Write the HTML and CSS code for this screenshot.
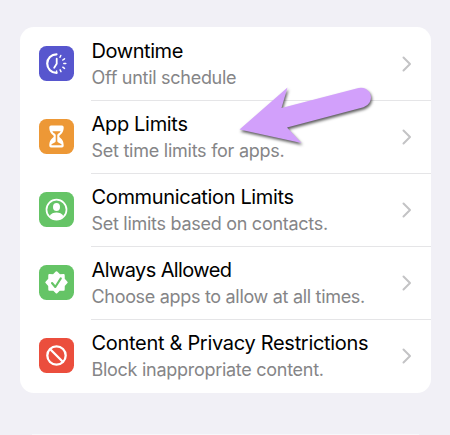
FILE: index.html
```html
<!DOCTYPE html>
<html lang="en">
<head>
<meta charset="utf-8">
<title>Screen Time</title>
<link rel="stylesheet" href="styles.css">
</head>
<body>
<main class="card">
  <section class="row">
    <svg class="icon indigo" viewBox="0 0 35 35">
      <g fill="none" stroke="#fff" stroke-linecap="round">
        <path d="M17.500 8.300a9.300 9.300 0 0 0 0 18.600" stroke-width="2.200"/>
        <path d="M17.700 12.700v5l-2.500 4.100" stroke-width="1.800"/>
        <path d="M21 11.200l.8-1.700M23.800 14l1.700-1.200M24.800 17.600h2M23.800 21.200l1.700 1.200M21.100 23.800l.9 1.800M17.600 25v2" stroke-width="1.500"/>
      </g>
    </svg>
    <div class="body">
      <div class="text"><h2 class="t1">Downtime</h2><p class="s1">Off until schedule</p></div>
      <svg class="chevron" viewBox="0 0 10 16"><path d="M1.500 1.500L8 8l-6.500 6.500"/></svg>
    </div>
  </section>
  <section class="row">
    <svg class="icon orange" viewBox="0 0 35 35">
      <path fill="#fff" d="M12 6.500h11q1.700 0 1.700 1.800c0 4.300-1.700 6.300-4.100 8.200q-.8.800 0 1.800c2.400 1.900 4.100 4 4.100 8.500q0 1.700-1.700 1.700H12q-1.700 0-1.700-1.700c0-4.500 1.700-6.600 4.100-8.500q.8-1 0-1.800c-2.400-1.900-4.100-3.900-4.100-8.200q0-1.800 1.700-1.800z"/>
      <path fill="#ed9836" d="M13.300 12.200h8.400q-.8 1.600-2.600 2.500-.8.500-.8 1.500v5.900q0 1 1 1.500l3.200 1.600v1H12.500v-1l3.200-1.600q1-.5 1-1.500v-5.900q0-1-.8-1.500-1.800-.9-2.600-2.500z"/>
    </svg>
    <div class="body">
      <div class="text"><h2 class="t2">App Limits</h2><p class="s2">Set time limits for apps.</p></div>
      <svg class="chevron" viewBox="0 0 10 16"><path d="M1.500 1.500L8 8l-6.500 6.500"/></svg>
    </div>
  </section>
  <section class="row">
    <svg class="icon green" viewBox="0 0 35 35">
      <circle cx="17.500" cy="17.700" r="10" fill="none" stroke="#fff" stroke-width="1.700"/>
      <ellipse cx="17.500" cy="15" rx="3.500" ry="4.100" fill="#fff"/>
      <path fill="#fff" d="M10.400 24.300c1.700-3 4.200-3.900 7.100-3.900s5.400.9 7.100 3.900q-2.900 3-7.100 3t-7.100-3z"/>
    </svg>
    <div class="body">
      <div class="text"><h2 class="t3">Communication Limits</h2><p class="s3">Set limits based on contacts.</p></div>
      <svg class="chevron" viewBox="0 0 10 16"><path d="M1.500 1.500L8 8l-6.500 6.500"/></svg>
    </div>
  </section>
  <section class="row">
    <svg class="icon green" viewBox="0 0 35 35">
      <path fill="#fff" stroke="#fff" stroke-width="2" stroke-linejoin="round" d="M17.500 7.300l3 2.900 4.200-.1.100 4.200 2.900 3.100-2.900 3.100-.1 4.200-4.200-.1-3 2.900-3-2.900-4.200.1-.1-4.200-2.900-3.100 2.900-3.100.1-4.200 4.200.1z"/>
      <path d="M13 18l3.300 4 5.500-8.600" fill="none" stroke="#65c466" stroke-width="2.100" stroke-linecap="round" stroke-linejoin="round"/>
    </svg>
    <div class="body">
      <div class="text"><h2 class="t4">Always Allowed</h2><p class="s4">Choose apps to allow at all times.</p></div>
      <svg class="chevron" viewBox="0 0 10 16"><path d="M1.500 1.500L8 8l-6.500 6.500"/></svg>
    </div>
  </section>
  <section class="row">
    <svg class="icon red" viewBox="0 0 35 35">
      <g fill="none" stroke="#fff" stroke-width="2.300"><circle cx="17.500" cy="17.500" r="9.200"/><path d="M11 11l13 13"/></g>
    </svg>
    <div class="body">
      <div class="text"><h2 class="t5">Content &amp; Privacy Restrictions</h2><p class="s5">Block inappropriate content.</p></div>
      <svg class="chevron" viewBox="0 0 10 16"><path d="M1.500 1.500L8 8l-6.500 6.500"/></svg>
    </div>
  </section>
</main>
<div class="next-card"></div>
<svg class="pointer" viewBox="0 0 150 80">
  <path d="M4.500 49.500L52.500 7.500 46.500 28 123.500 8A9.900 9.900 0 0 1 128.500 27.200L52 47.500 66.500 63z"/>
</svg>
</body>
</html>
```
FILE: styles.css
```css
* { box-sizing: border-box; }
body {
  margin: 0;
  height: 435px;
  padding: 27px 19.5px 0 20px;
  overflow: hidden;
  background: #f1f0f6;
  font-family: Inter, "Liberation Sans", sans-serif;
}
.card {
  height: 365.5px;
  padding-top: 0.7px;
  border-radius: 14px;
  background: #fff;
}
.next-card {
  height: 1px;
  margin: 41.5px 12px 0;
  background: #f8f8fb;
}
.row {
  display: flex;
  align-items: center;
  height: 73px;
  padding-left: 18.6px;
}
.icon {
  flex: none;
  width: 35px;
  height: 35px;
  margin: 0 17.9px 1px 0;
  border-radius: 7.5px;
}
.indigo { background: #5756ce; }
.orange { background: #ed9836; }
.green { background: #65c466; }
.red { background: #eb4e3d; }
.body {
  display: flex;
  flex: 1;
  align-items: center;
  justify-content: space-between;
  height: 100%;
  padding-right: 19px;
  border-bottom: 1px solid #e5e5e7;
}
.row:last-child .body { border-color: transparent; }
.text {
  padding-top: 1px;
  white-space: nowrap;
}
h2, p { margin: 0; font-weight: 400; }
h2 { font-size: 20px; line-height: 26px; color: #000; }
p { padding-top: 1px; font-size: 18px; line-height: 26px; color: #858587; }
.t1 { letter-spacing: -0.42px; }
.t2 { letter-spacing: -0.32px; }
.t3 { letter-spacing: -0.35px; }
.t4 { letter-spacing: -0.6px; }
.t5 { letter-spacing: -0.3px; }
.s1, .s3, .s5 { letter-spacing: -0.28px; }
.s2 { letter-spacing: -0.25px; }
.s4 { letter-spacing: -0.31px; }
.chevron {
  flex: none;
  width: 10px;
  height: 16px;
  fill: none;
  stroke: #c3c3c5;
  stroke-width: 2;
  stroke-linecap: round;
  stroke-linejoin: round;
}
.pointer {
  position: absolute;
  left: 235px;
  top: 80px;
  width: 150px;
  height: 80px;
  fill: #d2a0fb;
  filter: drop-shadow(1px 2px 1.5px rgba(0, 0, 0, 0.65));
}
```
